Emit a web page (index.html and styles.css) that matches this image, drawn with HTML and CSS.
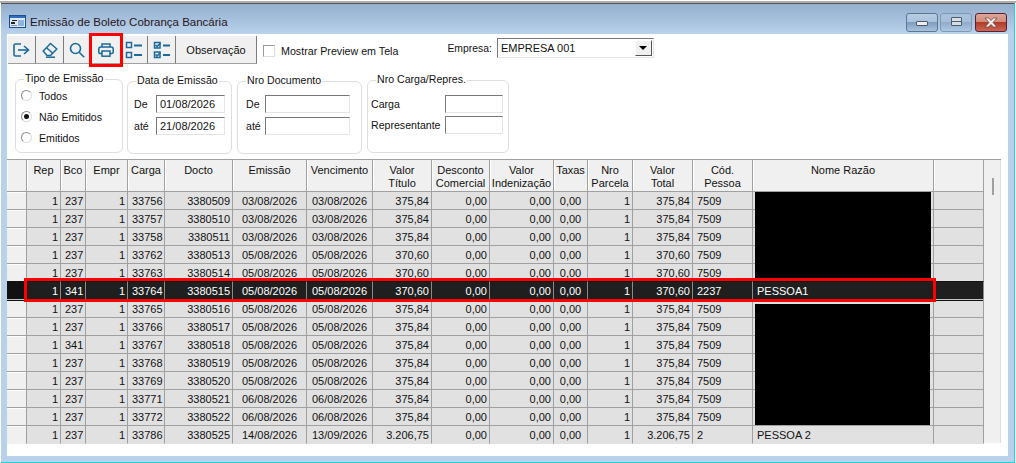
FILE: index.html
```html
<!DOCTYPE html>
<html lang="pt-BR">
<head>
    <meta charset="UTF-8">
    <title>Emissão de Boleto Cobrança Bancária</title>
    <link rel="stylesheet" href="styles.css">
</head>
<body>
    <div class="window">
        <div class="titlebar">
            <svg class="app-icon" width="17" height="13" viewBox="0 0 17 13">
                <rect x="0.5" y="0.5" width="16" height="12" fill="#dfe9f5" stroke="#1c4f8f"/>
                <rect x="1" y="1" width="15" height="2" fill="#2f6fc0"/>
                <rect x="3" y="5" width="5" height="1" fill="#222"/>
                <rect x="2" y="7" width="4" height="2" fill="#222"/>
                <rect x="9" y="5" width="6" height="6" fill="#8fb4e0"/>
                <rect x="2" y="10" width="6" height="1" fill="#7a8da8"/>
            </svg>
            <span class="title">Emissão de Boleto Cobrança Bancária</span>
            <div class="win-buttons">
                <div class="win-btn"><span class="min-glyph"></span></div>
                <div class="win-btn win-max"><span class="max-glyph"></span></div>
                <div class="win-btn win-close">
                    <svg width="16" height="11" viewBox="0 0 16 11"><path d="M2 1 L5.5 1 L8 3.5 L10.5 1 L14 1 L10 5.5 L14 10 L10.5 10 L8 7.5 L5.5 10 L2 10 L6 5.5 Z" fill="#eee" stroke="#6b3a3a" stroke-width="0.7"/></svg>
                </div>
            </div>
        </div>

        <div class="client">
            <div class="toolbar">
                <div class="tool w28">
                    <svg width="17" height="14" viewBox="0 0 17 14" fill="none" stroke="#1a6a9a" stroke-width="1.6"><path d="M8 1 H2.5 Q1 1 1 2.5 V11.5 Q1 13 2.5 13 H8"/><path d="M5 7 H15"/><path d="M11 3 L15.5 7 L11 11"/></svg>
                </div>
                <div class="tool w28">
                    <svg width="16" height="16" viewBox="0 0 16 16" fill="none" stroke="#1a6a9a" stroke-width="1.5"><path d="M1.2 9 L8.5 1.5 L14.8 7 L8.5 13.5 H5 Z"/><path d="M4.5 5.8 L10.8 11.2"/><path d="M4 15.2 H13"/></svg>
                </div>
                <div class="tool w27">
                    <svg width="16" height="16" viewBox="0 0 16 16" fill="none" stroke="#1a6a9a" stroke-width="1.6"><circle cx="6.5" cy="6.5" r="5"/><path d="M10.2 10.2 L15.2 15.2"/></svg>
                </div>
                <div class="tool w30">
                    <svg width="16" height="14" viewBox="0 0 16 14" fill="none" stroke="#1a6a9a" stroke-width="1.5"><path d="M4 4 V1 H12 V4"/><path d="M4 10.5 H2.5 Q0.8 10.5 0.8 9 V6 Q0.8 4 2.8 4 H13.2 Q15.2 4 15.2 6 V9 Q15.2 10.5 13.5 10.5 H12"/><rect x="4" y="8" width="8" height="5.2"/></svg>
                </div>
                <div class="tool w27">
                    <svg width="18" height="18" viewBox="0 0 18 18" fill="none" stroke="#1a6a9a" stroke-width="1.5"><rect x="1.5" y="1.5" width="5" height="5"/><rect x="1.5" y="11.5" width="5" height="5"/><path d="M9 4.5 H17" stroke-width="2"/><path d="M9 14 H17" stroke-width="2"/></svg>
                </div>
                <div class="tool w28">
                    <svg width="18" height="18" viewBox="0 0 18 18" fill="none" stroke="#1a6a9a" stroke-width="1.5"><rect x="1.5" y="1.5" width="5.5" height="5.5"/><rect x="1.5" y="11" width="5.5" height="5.5"/><path d="M2.6 4 L4 5.6 L7.5 2"/><path d="M2.6 13.5 L4 15.1 L7.5 11.5"/><path d="M10 4.5 H17" stroke-width="2"/><path d="M10 14 H17" stroke-width="2"/></svg>
                </div>
                <div class="tool w81">Observação</div>
                <label class="preview"><input type="checkbox" class="check">Mostrar Preview em Tela</label>
                <label class="empresa">Empresa:
                    <span class="combo">EMPRESA 001<span class="combo-btn"><span class="combo-arrow"></span></span></span>
                </label>
            </div>

            <div class="filters">
                <div class="group g-tipo">
                    <span class="group-title">Tipo de Emissão</span>
                    <div class="radio-row"><span class="radio"></span>Todos</div>
                    <div class="radio-row"><span class="radio on"></span>Não Emitidos</div>
                    <div class="radio-row"><span class="radio"></span>Emitidos</div>
                </div>
                <div class="group g-data">
                    <span class="group-title">Data de Emissão</span>
                    <div class="field"><label class="lbl-short">De</label><input class="txt txt-date" value="01/08/2026"></div>
                    <div class="field"><label class="lbl-short">até</label><input class="txt txt-date" value="21/08/2026"></div>
                </div>
                <div class="group g-doc">
                    <span class="group-title">Nro Documento</span>
                    <div class="field"><label class="lbl-short">De</label><input class="txt txt-doc"></div>
                    <div class="field"><label class="lbl-short">até</label><input class="txt txt-doc"></div>
                </div>
                <div class="group g-carga">
                    <span class="group-title">Nro Carga/Repres.</span>
                    <div class="field"><label class="lbl-long">Carga</label><input class="txt txt-carga"></div>
                    <div class="field"><label class="lbl-long">Representante</label><input class="txt txt-carga"></div>
                </div>
            </div>

            <div class="grid">
                <table>
                    <thead>
                        <tr>
                            <th class="c0"></th><th class="c1">Rep</th><th class="c2">Bco</th><th class="c3">Empr</th><th class="c4">Carga</th><th class="c5">Docto</th><th class="c6">Emissão</th><th class="c7">Vencimento</th><th class="c8">Valor<br>Título</th><th class="c9">Desconto<br>Comercial</th><th class="c10">Valor<br>Indenização</th><th class="c11">Taxas</th><th class="c12">Nro<br>Parcela</th><th class="c13">Valor<br>Total</th><th class="c14">Cód.<br>Pessoa</th><th class="c15">Nome Razão</th><th class="c16"></th>
                        </tr>
                    </thead>
                    <tbody>
                        <tr><td class="ind"></td><td class="r">1</td><td class="l">237</td><td class="r">1</td><td class="l">33756</td><td class="r">3380509</td><td class="c">03/08/2026</td><td class="c">03/08/2026</td><td class="r">375,84</td><td class="r">0,00</td><td class="r">0,00</td><td class="c">0,00</td><td class="r">1</td><td class="r">375,84</td><td class="l">7509</td><td class="l"></td><td></td></tr>
                        <tr><td class="ind"></td><td class="r">1</td><td class="l">237</td><td class="r">1</td><td class="l">33757</td><td class="r">3380510</td><td class="c">03/08/2026</td><td class="c">03/08/2026</td><td class="r">375,84</td><td class="r">0,00</td><td class="r">0,00</td><td class="c">0,00</td><td class="r">1</td><td class="r">375,84</td><td class="l">7509</td><td class="l"></td><td></td></tr>
                        <tr><td class="ind"></td><td class="r">1</td><td class="l">237</td><td class="r">1</td><td class="l">33758</td><td class="r">3380511</td><td class="c">03/08/2026</td><td class="c">03/08/2026</td><td class="r">375,84</td><td class="r">0,00</td><td class="r">0,00</td><td class="c">0,00</td><td class="r">1</td><td class="r">375,84</td><td class="l">7509</td><td class="l"></td><td></td></tr>
                        <tr><td class="ind"></td><td class="r">1</td><td class="l">237</td><td class="r">1</td><td class="l">33762</td><td class="r">3380513</td><td class="c">05/08/2026</td><td class="c">05/08/2026</td><td class="r">370,60</td><td class="r">0,00</td><td class="r">0,00</td><td class="c">0,00</td><td class="r">1</td><td class="r">370,60</td><td class="l">7509</td><td class="l"></td><td></td></tr>
                        <tr class="before-sel"><td class="ind"></td><td class="r">1</td><td class="l">237</td><td class="r">1</td><td class="l">33763</td><td class="r">3380514</td><td class="c">05/08/2026</td><td class="c">05/08/2026</td><td class="r">370,60</td><td class="r">0,00</td><td class="r">0,00</td><td class="c">0,00</td><td class="r">1</td><td class="r">370,60</td><td class="l">7509</td><td class="l"></td><td></td></tr>
                        <tr class="sel"><td class="ind"></td><td class="r">1</td><td class="l">341</td><td class="r">1</td><td class="l">33764</td><td class="r">3380515</td><td class="c">05/08/2026</td><td class="c">05/08/2026</td><td class="r">370,60</td><td class="r">0,00</td><td class="r">0,00</td><td class="c">0,00</td><td class="r">1</td><td class="r">370,60</td><td class="l">2237</td><td class="l">PESSOA1</td><td></td></tr>
                        <tr class="after-sel"><td class="ind"></td><td class="r">1</td><td class="l">237</td><td class="r">1</td><td class="l">33765</td><td class="r">3380516</td><td class="c">05/08/2026</td><td class="c">05/08/2026</td><td class="r">375,84</td><td class="r">0,00</td><td class="r">0,00</td><td class="c">0,00</td><td class="r">1</td><td class="r">375,84</td><td class="l">7509</td><td class="l"></td><td></td></tr>
                        <tr><td class="ind"></td><td class="r">1</td><td class="l">237</td><td class="r">1</td><td class="l">33766</td><td class="r">3380517</td><td class="c">05/08/2026</td><td class="c">05/08/2026</td><td class="r">375,84</td><td class="r">0,00</td><td class="r">0,00</td><td class="c">0,00</td><td class="r">1</td><td class="r">375,84</td><td class="l">7509</td><td class="l"></td><td></td></tr>
                        <tr><td class="ind"></td><td class="r">1</td><td class="l">341</td><td class="r">1</td><td class="l">33767</td><td class="r">3380518</td><td class="c">05/08/2026</td><td class="c">05/08/2026</td><td class="r">375,84</td><td class="r">0,00</td><td class="r">0,00</td><td class="c">0,00</td><td class="r">1</td><td class="r">375,84</td><td class="l">7509</td><td class="l"></td><td></td></tr>
                        <tr><td class="ind"></td><td class="r">1</td><td class="l">237</td><td class="r">1</td><td class="l">33768</td><td class="r">3380519</td><td class="c">05/08/2026</td><td class="c">05/08/2026</td><td class="r">375,84</td><td class="r">0,00</td><td class="r">0,00</td><td class="c">0,00</td><td class="r">1</td><td class="r">375,84</td><td class="l">7509</td><td class="l"></td><td></td></tr>
                        <tr><td class="ind"></td><td class="r">1</td><td class="l">237</td><td class="r">1</td><td class="l">33769</td><td class="r">3380520</td><td class="c">05/08/2026</td><td class="c">05/08/2026</td><td class="r">375,84</td><td class="r">0,00</td><td class="r">0,00</td><td class="c">0,00</td><td class="r">1</td><td class="r">375,84</td><td class="l">7509</td><td class="l"></td><td></td></tr>
                        <tr><td class="ind"></td><td class="r">1</td><td class="l">237</td><td class="r">1</td><td class="l">33771</td><td class="r">3380521</td><td class="c">06/08/2026</td><td class="c">06/08/2026</td><td class="r">375,84</td><td class="r">0,00</td><td class="r">0,00</td><td class="c">0,00</td><td class="r">1</td><td class="r">375,84</td><td class="l">7509</td><td class="l"></td><td></td></tr>
                        <tr><td class="ind"></td><td class="r">1</td><td class="l">237</td><td class="r">1</td><td class="l">33772</td><td class="r">3380522</td><td class="c">06/08/2026</td><td class="c">06/08/2026</td><td class="r">375,84</td><td class="r">0,00</td><td class="r">0,00</td><td class="c">0,00</td><td class="r">1</td><td class="r">375,84</td><td class="l">7509</td><td class="l"></td><td></td></tr>
                        <tr class="last"><td class="ind"></td><td class="r">1</td><td class="l">237</td><td class="r">1</td><td class="l">33786</td><td class="r">3380525</td><td class="c">14/08/2026</td><td class="c">13/09/2026</td><td class="r">3.206,75</td><td class="r">0,00</td><td class="r">0,00</td><td class="c">0,00</td><td class="r">1</td><td class="r">3.206,75</td><td class="l">2</td><td class="l">PESSOA 2</td><td></td></tr>
                    </tbody>
                </table>
                <div class="scrollbar"><span class="thumb"></span></div>

                <!-- tarjas e destaques sobre a grade -->
                <div class="mask mask-top"></div>
                <div class="mask mask-bottom"></div>
                <div class="mark mark-row"></div>
            </div>
            <div class="mark mark-print"></div>
        </div>
    </div>
</body>
</html>
```

FILE: styles.css
```css
* {
    box-sizing: border-box;
}

html, body {
    margin: 0;
    height: 463px;
    overflow: hidden;
    background-color: #fff;
}

body {
    font-family: "Liberation Sans", Arial, sans-serif;
    font-size: 11px;
    color: #111;
    padding: 3px 1px 0 1px;
    background: linear-gradient(#fff 0, #fff 1px, #b0adaa 1px, #b0adaa 3px, #fff 3px);
}

.window {
    width: 1014px;
    height: 460px;
    border-top: 1px solid #555;
    border-bottom: 1px solid #19d3e6;
    border-right: 1px solid #19d3e6;
    background-color: #b9d1ea;
    display: flex;
    flex-direction: column;
}

.titlebar {
    height: 30px;
    flex: none;
    display: flex;
    align-items: center;
    padding: 0 7px 0 8px;
    background: linear-gradient(#93afcd, #b9d2ec);
}

.app-icon {
    margin-top: 5px;
}

.title {
    margin-left: 4px;
    margin-top: 5px;
    font-size: 11.5px;
    color: #2a1420;
}

.win-buttons {
    margin-left: auto;
    display: flex;
    gap: 2px;
    margin-top: 6px;
}

.win-btn {
    width: 32px;
    height: 19px;
    border: 1px solid #5e7790;
    border-radius: 3px;
    background: linear-gradient(#b8cde3 0, #a9c2dc 50%, #7f9dbd 50%, #a7c3df 100%);
    display: flex;
    align-items: center;
    justify-content: center;
}

.win-max {
    border-color: #7f99b5;
    background: linear-gradient(#a9c2dc 0, #a5bfda 50%, #90accb 50%, #adc8e3 100%);
}

.win-close {
    border-color: #5a2030;
    background: linear-gradient(#dba598 0, #d08a78 50%, #b23b28 50%, #c9685a 100%);
    margin-left: 1px;
}

.min-glyph {
    width: 12px;
    height: 5px;
    margin-top: 3px;
    background-color: #eee;
    border: 1px solid #49596c;
    border-radius: 1px;
}

.max-glyph {
    width: 11px;
    height: 9px;
    margin-top: -2px;
    background: linear-gradient(#d8dde3 0, #d8dde3 3px, #4d5d70 3px, #4d5d70 4px, #d8dde3 4px);
    border: 1px solid #4d5d70;
    border-radius: 1px;
}

.client {
    position: relative;
    flex: none;
    width: 1001px;
    height: 422px;
    margin-left: 6px;
    background-color: #fff;
}

.toolbar {
    display: flex;
    align-items: flex-start;
    height: 30px;
    padding: 2px 0 0 1px;
}

.tool {
    height: 28px;
    display: flex;
    align-items: center;
    justify-content: center;
    background-color: #f0f0f0;
    border-right: 1px solid #7d7d7d;
    border-bottom: 1px solid #a0a0a0;
}

.w27 { width: 27px; }
.w28 { width: 28px; }
.w30 { width: 30px; }
.w81 { width: 81px; }

.preview {
    display: flex;
    align-items: center;
    margin-left: 6px;
    height: 28px;
    margin-top: 1px;
    font-size: 10.7px;
}

.check {
    appearance: none;
    width: 12px;
    height: 12px;
    margin: 0 6px 0 0;
    background-color: #fff;
    border: 1px solid #9a9a9a;
    border-bottom-color: #ddd;
    border-right-color: #ddd;
}

.empresa {
    display: flex;
    align-items: center;
    margin-left: 49px;
    height: 22px;
    margin-top: 1px;
    font-size: 10.4px;
}

.combo {
    width: 157px;
    height: 20px;
    margin-left: 5px;
    padding-left: 3px;
    font-size: 11px;
    display: flex;
    align-items: center;
    justify-content: space-between;
    background-color: #fff;
    border: 1px solid #e4e4e4;
    border-top: 1px solid #777;
    border-left: 1px solid #777;
}

.combo-btn {
    width: 17px;
    height: 16px;
    margin-right: 1px;
    display: flex;
    align-items: center;
    justify-content: center;
    background-color: #f0f0f0;
    border: 1px solid #fff;
    border-right-color: #555;
    border-bottom-color: #555;
}

.combo-arrow {
    width: 0;
    height: 0;
    border: 4px solid transparent;
    border-top-color: #000;
    border-bottom-width: 0;
}

.filters {
    display: flex;
    align-items: flex-start;
    height: 95px;
    padding: 15px 0 0 8px;
    font-size: 10.6px;
}

.group {
    position: relative;
    height: 74px;
    border: 1px solid #dedede;
    border-radius: 6px;
}

.group-title {
    position: absolute;
    top: -8px;
    left: 8px;
    padding: 0 1px;
    background-color: #fff;
    white-space: nowrap;
}

.g-tipo {
    width: 108px;
    padding: 5px 0 0 5px;
}

.g-data {
    width: 105px;
    margin: 2px 0 0 4px;
    height: 73px;
    padding: 13px 0 0 6px;
}

.g-doc {
    width: 125px;
    margin: 2px 0 0 5px;
    height: 73px;
    padding: 13px 0 0 8px;
}

.g-carga {
    width: 142px;
    margin: 1px 0 0 5px;
    height: 73px;
    padding: 14px 0 0 3px;
}

.g-carga .field {
    margin-bottom: 3px;
}

.radio-row {
    display: flex;
    align-items: center;
    height: 21px;
}

.radio {
    position: relative;
    width: 11px;
    height: 11px;
    margin-right: 7px;
    border-radius: 50%;
    background-color: #fff;
    border: 1px solid #8a8a8a;
    border-bottom-color: #ddd;
    border-right-color: #ddd;
}

.radio.on::after {
    content: "";
    position: absolute;
    left: 2px;
    top: 2px;
    width: 5px;
    height: 5px;
    border-radius: 50%;
    background-color: #111;
}

.field {
    display: flex;
    align-items: center;
    height: 18px;
    margin-bottom: 4px;
}

.lbl-short {
    width: 22px;
}

.g-doc .lbl-short {
    width: 19px;
}

.lbl-long {
    width: 74px;
}

.txt {
    height: 18px;
    padding: 0 0 0 3px;
    font: 11px "Liberation Sans", Arial, sans-serif;
    color: #111;
    background-color: #fff;
    border: 1px solid #e4e4e4;
    border-top: 1px solid #777;
    border-left: 1px solid #777;
    outline: none;
}

.txt-date { width: 69px; }
.txt-doc { width: 85px; }
.txt-carga { width: 58px; }

.grid {
    position: relative;
    width: 994px;
    display: flex;
    border-top: 1px solid #a0a0a0;
}

table {
    border-collapse: separate;
    border-spacing: 0;
    table-layout: fixed;
    width: 977px;
}

th, td {
    padding: 0;
    overflow: hidden;
    white-space: nowrap;
    border-right: 1px solid #a0a0a0;
    border-bottom: 1px solid #a0a0a0;
}

th {
    height: 32px;
    vertical-align: top;
    padding-top: 4px;
    line-height: 13px;
    font-weight: normal;
    background-color: #f0f0f0;
    box-shadow: inset 1px 0 0 #fff;
}

td {
    height: 18px;
    background-color: #e1e1e1;
    line-height: 16px;
}

.c0 { width: 20px; }
.c1 { width: 34px; }
.c2 { width: 25px; }
.c3 { width: 42px; }
.c4 { width: 37px; }
.c5 { width: 68px; }
.c6 { width: 74px; }
.c7 { width: 66px; }
.c8 { width: 59px; }
.c9 { width: 58px; }
.c10 { width: 64px; }
.c11 { width: 34px; }
.c12 { width: 45px; }
.c13 { width: 60px; }
.c14 { width: 60px; }
.c15 { width: 181px; }
.c16 { width: 50px; }

.r { text-align: right; padding-right: 2px; }
.l { text-align: left; padding-left: 4px; }
.c { text-align: center; }

.ind {
    background-color: #f0f0f0;
    box-shadow: inset 0 1px 0 #fff;
}

.last td {
    border-bottom-color: #e1e1e1;
}

.last .ind {
    border-bottom-color: #f0f0f0;
}

.before-sel td {
    border-bottom-color: #111;
}

.sel td {
    background-color: #1f1f1f;
    color: #fff;
    border-bottom-color: #c4c4c4;
    border-right-color: #8a8a8a;
}

.sel .ind {
    background-color: #111;
    box-shadow: none;
}

.after-sel td {
    box-shadow: inset 0 1px 0 #111;
}

.scrollbar {
    width: 18px;
    height: 283px;
    padding: 18px 0 0 8px;
    background-color: #f0f0f0;
    border-right: 1px solid #ddd;
}

.thumb {
    display: block;
    width: 2px;
    height: 17px;
    background-color: #a0a0a0;
}

.mask {
    position: absolute;
    background-color: #000;
}

.mask-top {
    left: 748px;
    top: 32px;
    width: 176px;
    height: 87px;
}

.mask-bottom {
    left: 748px;
    top: 144px;
    width: 175px;
    height: 121px;
}

.mark {
    position: absolute;
    border: 3px solid #f00;
    pointer-events: none;
}

.mark-row {
    left: 17px;
    top: 118px;
    width: 912px;
    height: 24px;
}

.mark-print {
    left: 82px;
    top: -1px;
    width: 34px;
    height: 34px;
}
```
